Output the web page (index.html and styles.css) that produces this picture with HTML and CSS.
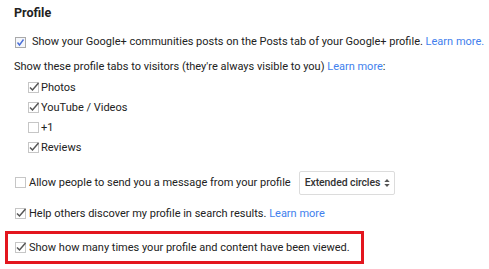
FILE: index.html
```html
<!DOCTYPE html>
<html>
<head>
<meta charset="utf-8">
<link rel="stylesheet" href="styles.css">
</head>
<body>
<div class="page">
  <h2 class="title">Profile</h2>

  <div class="row r1">
    <span class="cb cb-blue"><svg width="11" height="11" viewBox="0 0 11 11"><rect x="0.5" y="0.5" width="10" height="10" fill="#f4f6fa" stroke="#a9a9a9"/><path d="M2.5 5.5 L4.5 8 L8.5 2.5" fill="none" stroke="#4a6fd8" stroke-width="1.4"/></svg></span>
    <span>Show your Google+ communities posts on the Posts tab of your Google+ profile. <a class="link">Learn more.</a></span>
  </div>

  <div class="row r2"><span>Show these profile tabs to visitors (they're always visible to you) <a class="link">Learn more</a>:</span></div>

  <div class="tabs">
    <div class="row sub"><span class="cb"><svg width="13" height="13" viewBox="0 0 13 13"><rect x="0.5" y="2.5" width="10" height="10" fill="#fff" stroke="#c6c6c6"/><path d="M2 7.5 L4.5 10 L10.5 3" fill="none" stroke="#555" stroke-width="1.5"/></svg></span><span>Photos</span></div>
    <div class="row sub"><span class="cb"><svg width="13" height="13" viewBox="0 0 13 13"><rect x="0.5" y="2.5" width="10" height="10" fill="#fff" stroke="#c6c6c6"/><path d="M2 7.5 L4.5 10 L10.5 3" fill="none" stroke="#555" stroke-width="1.5"/></svg></span><span>YouTube / Videos</span></div>
    <div class="row sub"><span class="cb"><svg width="13" height="13" viewBox="0 0 13 13"><rect x="0.5" y="2.5" width="10" height="10" fill="#fff" stroke="#c6c6c6"/></svg></span><span>+1</span></div>
    <div class="row sub"><span class="cb"><svg width="13" height="13" viewBox="0 0 13 13"><rect x="0.5" y="2.5" width="10" height="10" fill="#fff" stroke="#c6c6c6"/><path d="M2 7.5 L4.5 10 L10.5 3" fill="none" stroke="#555" stroke-width="1.5"/></svg></span><span>Reviews</span></div>
  </div>

  <div class="row r-msg">
    <span class="cb"><svg width="13" height="13" viewBox="0 0 13 13"><rect x="0.5" y="2.5" width="10" height="10" fill="#fff" stroke="#c6c6c6"/></svg></span>
    <span>Allow people to send you a message from your profile</span>
    <span class="select">Extended circles <svg width="6" height="10" viewBox="0 0 6 10"><path d="M0.3 4 L3 1 L5.7 4 Z M0.3 6 L3 9 L5.7 6 Z" fill="#555"/></svg></span>
  </div>

  <div class="row r-help">
    <span class="cb"><svg width="13" height="13" viewBox="0 0 13 13"><rect x="0.5" y="2.5" width="10" height="10" fill="#fff" stroke="#c6c6c6"/><path d="M2 7.5 L4.5 10 L10.5 3" fill="none" stroke="#555" stroke-width="1.5"/></svg></span>
    <span>Help others discover my profile in search results. <a class="link">Learn more</a></span>
  </div>

  <div class="highlight">
    <div class="row">
      <span class="cb"><svg width="13" height="13" viewBox="0 0 13 13"><rect x="0.5" y="2.5" width="10" height="10" fill="#fff" stroke="#c6c6c6"/><path d="M2 7.5 L4.5 10 L10.5 3" fill="none" stroke="#555" stroke-width="1.5"/></svg></span>
      <span>Show how many times your profile and content have been viewed.</span>
    </div>
  </div>
</div>
</body>
</html>
```

FILE: styles.css
```css
html, body {
  margin: 0;
  padding: 0;
  background: #fff;
}
body {
  font-family: Roboto, "Liberation Sans", sans-serif;
  font-size: 11px;
  color: #222;
}
.page {
  padding: 5px 0 0 14px;
  width: 489px;
  height: 269px;
  box-sizing: border-box;
}
.title {
  margin: 0;
  font-size: 12.5px;
  font-weight: bold;
  line-height: 16px;
  color: #222;
}
.row {
  display: flex;
  align-items: center;
  line-height: 16px;
  white-space: nowrap;
}
.link {
  color: #427fed;
  text-decoration: none;
}
.cb {
  display: inline-flex;
  flex: none;
}
.cb svg { display: block; }
.r1 {
  margin-top: 13px;
}
.r1 .cb { margin-right: 6px; margin-left: 1px; }
.r2 {
  margin-top: 9px;
}
.tabs {
  margin-top: 3px;
  padding-left: 14px;
}
.sub {
  height: 20px;
}
.sub .cb { margin-top: -3px; }
.r-msg {
  margin-top: 13px;
}
.r-msg .cb, .r-help .cb, .highlight .cb { margin-right: 1px; margin-top: -3px; margin-left: 1px; }
.select {
  margin-left: 8px;
  display: inline-flex;
  align-items: center;
  gap: 4px;
  height: 22px;
  padding: 0 4px 0 5px;
  border: 1px solid #dcdcdc;
  border-radius: 2px;
  font-weight: 500;
  font-size: 10.5px;
  letter-spacing: -0.1px;
  color: #333;
}
.r-help {
  margin-top: 11px;
}
.highlight {
  margin: 9px 0 0 -9px;
  width: 359px;
  height: 33px;
  box-sizing: border-box;
  border: 3px solid #e3161e;
  padding: 0 0 0 6px;
  display: flex;
  align-items: center;
}
```
